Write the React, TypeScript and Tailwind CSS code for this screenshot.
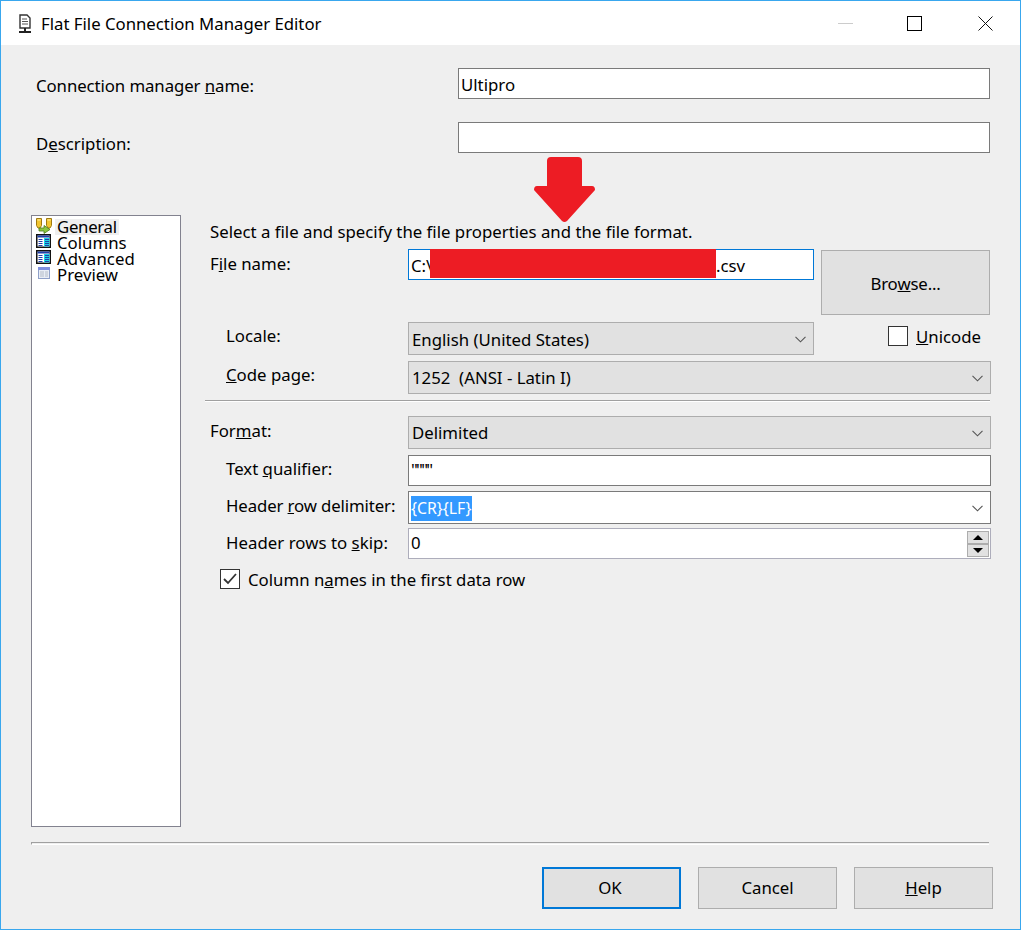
import React from 'react';

const Chevron = () => (
  <svg width="11" height="7" viewBox="0 0 11 7" className="shrink-0 mt-[1px]">
    <path d="M0.500 0.800 L5.500 5.800 L10.500 0.800" fill="none" stroke="#555" strokeWidth="1.100" />
  </svg>
);

const Combo = ({ text, width, flat }: { text: React.ReactNode; width: string; flat?: boolean }) => (
  <div className={`${width} h-[33px] flex items-center justify-between pr-[7px] border ${flat ? 'border-[#7a7a7a] bg-white pl-[2px]' : 'border-[#adadad] bg-[#e1e1e1] pl-[3px]'}`}>
    <span className="whitespace-pre">{text}</span>
    <Chevron />
  </div>
);

const Row = ({ label, labelClass, children, className }: { label: React.ReactNode; labelClass: string; children: React.ReactNode; className?: string }) => (
  <div className={`flex items-center ${className ?? ''}`}>
    <div className={`w-[203px] ${labelClass}`}>{label}</div>
    {children}
  </div>
);

const TextBox = ({ children, className }: { children?: React.ReactNode; className?: string }) => (
  <div className={`h-[31px] bg-white border border-[#7a7a7a] flex items-center ${className ?? ''}`}>{children}</div>
);

const Button = ({ children, focused }: { children: React.ReactNode; focused?: boolean }) => (
  <div className={`w-[139px] h-[42px] flex items-center justify-center bg-[#e1e1e1] ${focused ? 'border-2 border-[#0078d7] pr-[3px]' : 'border border-[#adadad]'}`}>
    {children}
  </div>
);

const ConnIcon = () => (
  <svg width="16" height="20" viewBox="0 0 16 20">
    <path d="M3 1h7l3 3v10H3z" fill="#fff" stroke="#333" strokeWidth="1.400" />
    <path d="M5 5h5M5 7.500h6M5 10h6" stroke="#555" strokeWidth="1" />
    <path d="M8 14v3M2 18h12" stroke="#222" strokeWidth="2" />
  </svg>
);

const GeneralIcon = () => (
  <svg width="17" height="16" viewBox="0 0 17 16">
    <path d="M1.500 0.500h5v7L5 10H3L1.500 7.500zM11.500 0.500h5v7L15 10h-2l-1.500-2.500z" fill="#f2c531" stroke="#a07a10" strokeWidth="1" />
    <path d="M2.500 2h3M12.500 2h3" stroke="#fff1a8" strokeWidth="1" />
    <path d="M4 10v3h5v2.500l6-4-6-4V10z" fill="#8cc63f" stroke="#4e7d1c" strokeWidth="0.800" />
  </svg>
);

const GridIcon = () => (
  <svg width="16" height="15" viewBox="0 0 16 15">
    <rect x="1.750" y="0.750" width="13.500" height="12.500" fill="#fff" stroke="#111" strokeWidth="1.500" />
    <rect x="2.500" y="1.500" width="12" height="2" fill="#1f3fa8" />
    <rect x="9" y="4" width="5.500" height="8.500" fill="#19d6e6" />
    <path d="M3.500 5.500h4M3.500 7.500h4M3.500 9.500h4M3.500 11.500h4M10 5.500h4M10 7.500h4M10 9.500h4M10 11.500h4" stroke="#1f3fa8" />
  </svg>
);

const PreviewIcon = () => (
  <svg width="16" height="14" viewBox="0 0 16 14">
    <rect x="3.500" y="1.500" width="11" height="11" fill="#e8edf5" stroke="#8fa0c8" />
    <rect x="3" y="1" width="12" height="3" fill="#7f90e0" />
    <path d="M5 6h4M5 8h4M5 10h4M10 6h3M10 8h3M10 10h3" stroke="#b4bcc8" />
  </svg>
);

const NavItem = ({ icon, text, selected, textClass }: { icon: React.ReactNode; text: string; selected?: boolean; textClass?: string }) => (
  <div className="flex items-center h-[16px]">
    <span className="w-[16px] h-[16px] shrink-0 -mt-[2px]">{icon}</span>
    <span className={`ml-[4px] px-[2px] leading-[16px] ${selected ? 'bg-[#efefef]' : ''} ${textClass ?? ''}`}>{text}</span>
  </div>
);

export default function App() {
  return (
    <div className="w-[1021px] h-[937px] bg-white overflow-hidden font-['Noto_Sans',sans-serif] text-[16.800px] text-black">
      <div className="relative h-[930px] bg-[#efefef] border border-[#39a7ee]">
        {/* title bar */}
        <div className="h-[44px] bg-white flex items-center">
          <div className="ml-[16px] w-[16px] h-[20px] mt-[2px]"><ConnIcon /></div>
          <span className="ml-[8px] pt-px text-[16.750px]">Flat File Connection Manager Editor</span>
          <div className="ml-auto flex items-center mr-[27px]">
            <div className="w-[15px] h-px bg-[#cccccc]" />
            <div className="ml-[54px] w-[15px] h-[15px] border border-black" />
            <svg width="15" height="15" viewBox="0 0 15 15" className="ml-[56px]"><path d="M0.500 0.500 L14.500 14.500 M14.500 0.500 L0.500 14.500" stroke="#111" strokeWidth="1" /></svg>
          </div>
        </div>

        {/* red arrow pasted over the dialog */}
        <svg width="61" height="66" viewBox="0 0 61 66" className="absolute left-[533px] top-[156px]">
          <path d="M17 0H44Q48 0 48 4V29H58Q61 29 61 33L33 64Q30.500 66 28 64L0 33Q0 29 3 29H13V4Q13 0 17 0Z" fill="#ed1c24" />
        </svg>

        <div className="mt-[23px] ml-[35px] flex items-center">
          <div className="w-[422px] pt-[5px] tracking-[-0.080px]">Connection manager <u>n</u>ame:</div>
          <TextBox className="w-[532px] pl-[2px] pt-[3px]">Ultipro</TextBox>
        </div>
        <div className="mt-[23px] ml-[35px] flex items-start">
          <div className="w-[422px] h-[31px] pt-[9px]">D<u>e</u>scription:</div>
          <TextBox className="w-[532px]" />
        </div>

        <div className="mt-[62px] ml-[30px] flex">
          <div className="w-[150px] h-[612px] bg-white border border-[#82828f] pl-[3px] pt-[3px]">
            <NavItem icon={<GeneralIcon />} text="General" selected textClass="tracking-[-0.300px]" />
            <NavItem icon={<GridIcon />} text="Columns" />
            <NavItem icon={<GridIcon />} text="Advanced" textClass="tracking-[0.100px]" />
            <NavItem icon={<PreviewIcon />} text="Preview" />
          </div>

          <div className="ml-[24px] w-[786px]">
            <div className="h-[34px] pl-[5px] pt-[4px]">Select a file and specify the file properties and the file format.</div>

            <div className="flex">
              <div className="w-[609px]">
                <Row label={<>F<u>i</u>le name:</>} labelClass="pl-[5px] pb-[2px]">
                  <div className="w-[406px] h-[31px] bg-white border border-[#0078d7] flex items-stretch pl-[2px]">
                    <span className="self-center pt-[2px] w-[19px] whitespace-nowrap">C:\</span>
                    <div className="relative w-[286px] -mt-px mb-px bg-[#ed1c24]" />
                    <span className="self-center pt-[2px]">.csv</span>
                  </div>
                </Row>
                <Row label={<>Locale:</>} labelClass="pl-[21px] pb-[5px]" className="mt-[42px]">
                  <Combo text={<span className="pt-[2px] inline-block">English (United States)</span>} width="w-[406px]" />
                </Row>
              </div>
              <div className="ml-[7px]">
                <div className="w-[169px] h-[65px] mt-px pt-[3px] flex items-center justify-center bg-[#e1e1e1] border border-[#adadad] tracking-[-0.200px]">Bro<u>w</u>se...</div>
                <div className="flex items-center mt-[11px] ml-[67px]">
                  <div className="w-[20px] h-[20px] bg-white border border-[#333]" />
                  <span className="ml-[8px] h-[20px] leading-[22px]"><u>U</u>nicode</span>
                </div>
              </div>
            </div>

            <Row label={<><u>C</u>ode page:</>} labelClass="pl-[21px] pb-[5px]" className="mt-[6px]">
              <Combo text="1252  (ANSI - Latin I)" width="w-[583px]" />
            </Row>

            <div className="mt-[6px] w-[785px] h-[2px] border-t border-[#a0a0a0] border-b border-b-white" />

            <Row label={<>For<u>m</u>at:</>} labelClass="pl-[5px] pb-[4px]" className="mt-[14px]">
              <Combo text="Delimited" width="w-[583px]" />
            </Row>
            <Row label={<>Text <u>q</u>ualifier:</>} labelClass="pl-[21px] pb-[3px]" className="mt-[6px]">
              <TextBox className="w-[583px] pl-[2px]"><span className="tracking-[-1.750px] pb-[2px]">""""</span></TextBox>
            </Row>
            <Row label={<>Header <u>r</u>ow delimiter:</>} labelClass="pl-[21px] pb-[3px] tracking-[-0.120px]" className="mt-[5px]">
              <Combo flat width="w-[583px]" text={<span className="bg-[#3399ff] text-white inline-block leading-[25px] text-[15.800px]">{'{CR}{LF}'}</span>} />
            </Row>
            <Row label={<>Header rows to <u>s</u>kip:</>} labelClass="pl-[21px] pb-[1px] tracking-[0.040px]" className="mt-[4px]">
              <div className="w-[583px] h-[31px] bg-white border border-[#adadbb] flex items-center justify-between pl-[2px] pr-[1px]">
                <span className="pb-[2px]">0</span>
                <div className="flex flex-col w-[22px]">
                  <div className="h-[13px] bg-[#e1e1e1] border border-[#adadad] flex items-center justify-center">
                    <div className="w-0 h-0 border-x-[5px] border-x-transparent border-b-[5px] border-b-black" />
                  </div>
                  <div className="h-[13px] bg-[#e1e1e1] border border-[#adadad] flex items-center justify-center">
                    <div className="w-0 h-0 border-x-[5px] border-x-transparent border-t-[5px] border-t-black" />
                  </div>
                </div>
              </div>
            </Row>
            <div className="mt-[10px] ml-[15px] flex items-center">
              <div className="w-[20px] h-[20px] bg-white border border-[#333] flex items-center justify-center">
                <svg width="14" height="12" viewBox="0 0 14 12"><path d="M1 6 L5 10 L13 1" fill="none" stroke="#333" strokeWidth="1.800" /></svg>
              </div>
              <span className="ml-[8px] h-[20px] leading-[22px]">Column n<u>a</u>mes in the first data row</span>
            </div>
          </div>
        </div>

        <div className="mt-[15px] ml-[30px] w-[958px] h-[3px] border-t border-[#a0a0a0] border-l border-b border-b-white" />

        <div className="mt-[22px] ml-[541px] flex gap-[17px]">
          <Button focused>OK</Button>
          <Button>Cancel</Button>
          <Button><span><u>H</u>elp</span></Button>
        </div>
      </div>
    </div>
  );
}
